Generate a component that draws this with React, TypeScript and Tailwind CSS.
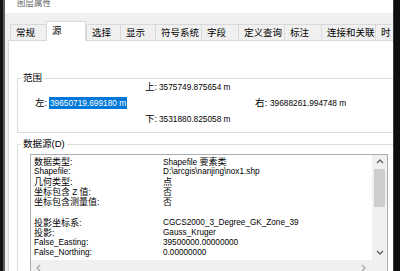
import React from "react";

const C = ({ children }: { children: React.ReactNode }) => (
  <span className="text-[9px]">{children}</span>
);

function Chevron({ dir, color = "#606060" }: { dir: "up" | "down" | "left" | "right"; color?: string }) {
  const paths: Record<string, string> = {
    up: "M1 5 L4 2 L7 5",
    down: "M1 2 L4 5 L7 2",
    left: "M5 1 L2 4 L5 7",
    right: "M2 1 L5 4 L2 7",
  };
  return (
    <svg width="8" height="8" viewBox="0 0 8 8" className="block">
      <path d={paths[dir]} fill="none" stroke={color} strokeWidth="1.3" />
    </svg>
  );
}

const tabs: [string, number, boolean?][] = [
  ["常规", 37],
  ["源", 40, true],
  ["选择", 35],
  ["显示", 36],
  ["符号系统", 47],
  ["字段", 38],
  ["定义查询", 47],
  ["标注", 38],
  ["连接和关联", 55],
  ["时", 30],
];

const rows: [React.ReactNode, React.ReactNode][] = [
  [<C>数据类型:</C>, <>Shapefile <C>要素类</C></>],
  ["Shapefile:", "D:\\arcgis\\nanjing\\nox1.shp"],
  [<C>几何类型:</C>, <C>点</C>],
  [<><C>坐标包含</C> Z <C>值</C>:</>, <C>否</C>],
  [<C>坐标包含测量值:</C>, <C>否</C>],
  ["", ""],
  [<C>投影坐标系:</C>, "CGCS2000_3_Degree_GK_Zone_39"],
  [<C>投影:</C>, "Gauss_Kruger"],
  ["False_Easting:", "39500000.00000000"],
  ["False_Northing:", "0.00000000"],
];

export default function App() {
  return (
    <div className="w-[400px] h-[271px] flex overflow-hidden bg-[#0e0e0e] font-[Liberation_Sans,Noto_Sans_CJK_SC,sans-serif] text-black">
      <div className="w-[3px] shrink-0 bg-[#141414]" />
      <div className="w-[2px] shrink-0 bg-[#5e5e5e]" />
      <div className="w-[388px] shrink-0 flex flex-col bg-[#f0f0f0] overflow-hidden">
        {/* title */}
        <div className="h-[13px] shrink-0 bg-white overflow-hidden">
          <div className="ml-[12px] mt-[-1px] text-[8.5px] leading-[9px] text-[#6a6a6a]">图层属性</div>
        </div>
        <div className="h-[8px] shrink-0" />
        {/* tabs */}
        <div className="h-[19px] shrink-0 flex items-end pl-[5px]">
          {tabs.map(([t, w, sel]) => (
            <div
              key={t}
              style={{ width: w }}
              className={
                sel
                  ? "h-[20px] mb-[-1px] relative z-10 bg-white border-t border-l border-r border-[#d9d9d9] shrink-0 pl-[5px] text-[9.5px] leading-[18px]"
                  : "h-[16px] bg-[#f0f0f0] border-t border-l border-r border-[#d9d9d9] -mr-px shrink-0 pl-[5px] text-[9.5px] leading-[15px]"
              }
            >
              {t}
            </div>
          ))}
        </div>
        {/* panel */}
        <div className="w-[420px] ml-[3px] flex-1 bg-white border border-[#d9d9d9] flex flex-col">
          <fieldset className="w-[420px] ml-[8px] mt-[31px] border border-[#dcdcdc] pb-[5px]">
            <legend className="ml-[3px] px-[2px] text-[9.5px] leading-[12px]">范围</legend>
            <div className="mt-[-5px] flex flex-col text-[8.3px]">
              <div className="h-[16px] flex items-center pl-[127px]">
                <span className="w-[14px] text-[9.5px]">上:</span>
                <span>3575749.875654 m</span>
              </div>
              <div className="h-[16px] flex items-center pl-[17px]">
                <span className="w-[14px] text-[9.5px]">左:</span>
                <span className="w-[78px] h-[12px] leading-[12px] bg-[#0078d7] text-white pl-[1px]">39650719.699180 m</span>
                <span className="ml-[128px] w-[15px] text-[9.5px]">右:</span>
                <span>39688261.994748 m</span>
              </div>
              <div className="h-[16px] flex items-center pl-[127px]">
                <span className="w-[14px] text-[9.5px]">下:</span>
                <span>3531880.825058 m</span>
              </div>
            </div>
          </fieldset>
          <fieldset className="w-[420px] ml-[8px] mt-[5px] border border-[#dcdcdc]">
            <legend className="ml-[3px] px-[2px] text-[9.5px] leading-[12px]">数据源(D)</legend>
            <div className="ml-[12px] mt-[4px] w-[358px] h-[125px] border border-[#abadb3] bg-white flex">
              <div className="w-[341px] flex flex-col">
                <div className="h-[105px] pt-[2px] pl-[3px] text-[8.2px] overflow-hidden">
                  {rows.map(([l, v], i) => (
                    <div key={i} className="h-[10.1px] leading-[10.1px] flex whitespace-nowrap">
                      <div className="w-[129px]">{l}</div>
                      <div>{v}</div>
                    </div>
                  ))}
                </div>
                <div className="h-[15px] bg-[#f0f0f0] flex items-center justify-between pl-[4px] pr-[4px]">
                  <Chevron dir="left" color="#a8a8a8" />
                  <Chevron dir="right" color="#a8a8a8" />
                </div>
              </div>
              <div className="w-[15px] flex flex-col bg-[#f0f0f0]">
                <div className="h-[105px] flex flex-col items-center">
                  <div className="h-[14px] flex items-center justify-center">
                    <Chevron dir="up" />
                  </div>
                  <div className="w-[11px] h-[38px] bg-[#cdcdcd]" />
                  <div className="flex-1" />
                  <div className="h-[14px] flex items-center justify-center">
                    <Chevron dir="down" />
                  </div>
                </div>
                <div className="h-[15px] bg-[#f0f0f0]" />
              </div>
            </div>
          </fieldset>
        </div>
      </div>
      <div className="w-[1px] shrink-0 bg-[#3a3a3a]" />
      <div className="flex-1 bg-[#0e0e0e]" />
    </div>
  );
}
